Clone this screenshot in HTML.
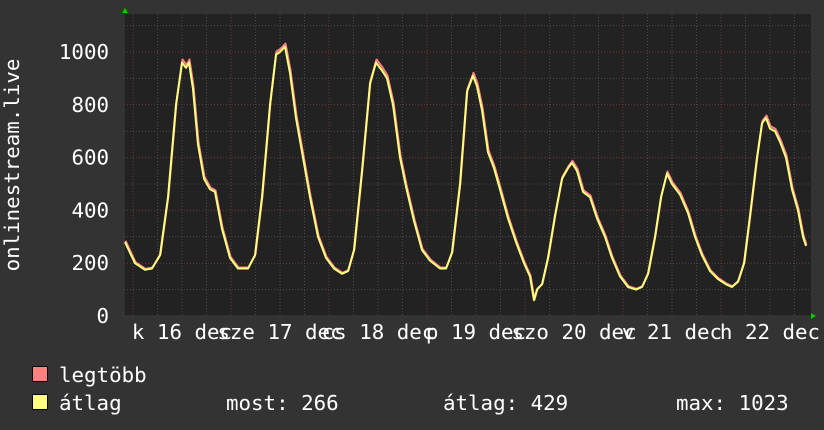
<!DOCTYPE html>
<html><head><meta charset="utf-8"><style>
html,body{margin:0;padding:0;background:#333;}
svg{display:block;}
text{font-family:"DejaVu Sans Mono","Liberation Mono",monospace;fill:#fff;}
</style></head><body>
<svg id="s" width="824" height="430" xmlns="http://www.w3.org/2000/svg">
<rect width="824" height="430" fill="#333"/>
<rect x="124" y="14" width="687" height="302" fill="#222"/>
<g id="grid"></g>
<line x1="124" y1="14" x2="124" y2="318" stroke="#3a3a3a" stroke-width="1"/>
<line x1="122" y1="316" x2="812" y2="316" stroke="#3a3a3a" stroke-width="1"/>
<polygon points="122,13 128,13 125,8" fill="#0c0"/>
<polygon points="811,313 811,319 816,316" fill="#0c0"/>
<g id="ylab" font-size="20.8" text-anchor="end"></g>
<text transform="translate(19,165) rotate(-90)" font-size="20.8" text-anchor="middle">onlinestream.live</text>
<g id="xlab" font-size="20.8" text-anchor="middle"></g>
<polyline id="pmax" fill="none" stroke="#ff8080" stroke-width="2" stroke-linejoin="round"/>
<polyline id="pavg" fill="none" stroke="#ffff80" stroke-width="2" stroke-linejoin="round"/>
<rect x="32.5" y="366.5" width="15" height="15" fill="#ff8080" stroke="#000"/>
<rect x="32.5" y="394.5" width="15" height="15" fill="#ffff80" stroke="#000"/>
<text x="59" y="382" font-size="20.8">legtöbb</text>
<text x="59" y="410" font-size="20.8">átlag</text>
<text x="226" y="410" font-size="20.8">most: 266</text>
<text x="443" y="410" font-size="20.8">átlag: 429</text>
<text x="676" y="410" font-size="20.8">max: 1023</text>
</svg>
<script>
var NS="http://www.w3.org/2000/svg";
function el(t,a,p){var e=document.createElementNS(NS,t);for(var k in a)e.setAttribute(k,a[k]);p.appendChild(e);return e;}
var g=document.getElementById('grid');
for(var k=0;k<=11;k++){var y=316-26.4*k;if(y<14)continue;
 el('line',{x1:124,x2:811,y1:y,y2:y,stroke:(k%2==0)?'#6a3a3a':'#4a4a4a','stroke-dasharray':'1,2','stroke-width':1},g);}
for(var i=0;i<29;i++){var x=133+24.5*i;if(x>811)break;
 el('line',{x1:x,x2:x,y1:14,y2:316,stroke:(i%4==0)?'#6a3a3a':'#4a4a4a','stroke-dasharray':'1,2','stroke-width':1},g);}
var yl=document.getElementById('ylab');
[0,200,400,600,800,1000].forEach(function(v){var t=el('text',{x:109,y:316-v*0.264+7},yl);t.textContent=v;});
var xl=document.getElementById('xlab');
var labs=['k 16 dec','sze 17 dec','cs 18 dec','p 19 dec','szo 20 dec','v 21 dec','h 22 dec'];
labs.forEach(function(s,i){var t=el('text',{x:133+98*i+49,y:339},xl);t.textContent=s;});
var d=[125,280,135,200,145,175,152,180,160,230,168,450,176,800,182,960,186,940,189,960,193,860,198,650,204,520,210,480,215,470,222,330,230,220,238,180,248,180,255,230,262,450,270,800,276,990,280,1000,285,1020,290,920,296,750,303,600,310,450,318,300,326,220,334,180,342,160,348,170,354,250,362,550,370,880,376,960,382,930,387,900,393,800,400,600,406,490,414,360,422,250,430,210,440,180,446,180,452,240,460,500,467,850,473,910,477,870,482,780,488,620,494,560,500,480,508,370,516,280,524,200,530,150,534,60,537,100,542,120,548,220,555,380,562,520,568,560,572,580,577,550,583,470,590,450,597,370,605,300,612,220,620,150,628,110,636,100,642,110,648,160,655,300,661,450,667,540,672,500,680,460,688,390,695,300,702,230,710,170,718,140,726,120,732,110,738,130,744,200,750,380,757,600,762,730,766,750,770,710,775,700,780,660,786,600,792,480,798,400,803,300,806,265];
var a=[],b=[];
for(var j=0;j<d.length;j+=2){var x=d[j],v=d[j+1];
 a.push(x+','+(316-v*0.264).toFixed(1));
 b.push((x+0.5)+','+(316-v*1.01*0.264-0.5).toFixed(1));}
document.getElementById('pavg').setAttribute('points',a.join(' '));
document.getElementById('pmax').setAttribute('points',b.join(' '));
</script>
</body></html>
